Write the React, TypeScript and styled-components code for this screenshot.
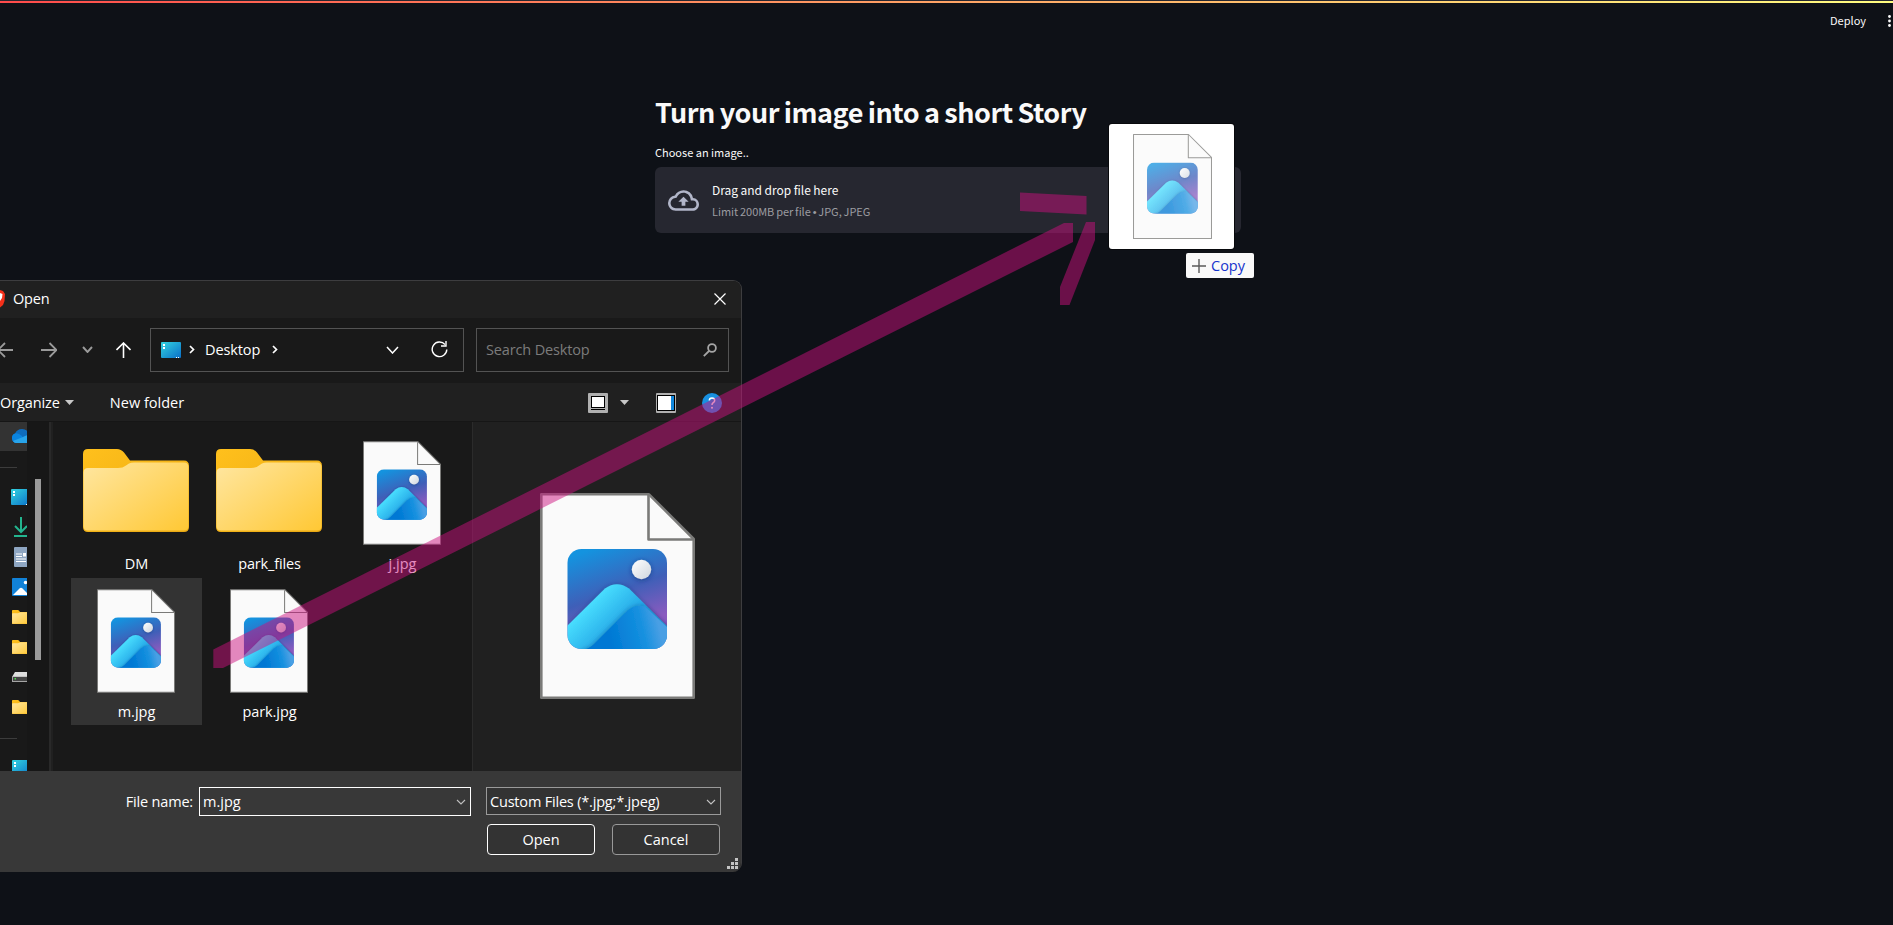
import React, { useId } from "react";
import styled, { createGlobalStyle } from "styled-components";

const Global = createGlobalStyle`
  * { box-sizing: border-box; }
  body { margin: 0; background: #0e1117; overflow: hidden; }
  svg { display: block; flex: none; }
`;

const ui = `"Open Sans", "Noto Sans", sans-serif`;
const web = `"Noto Sans CJK SC", "Noto Sans", sans-serif`;

/* ---------- Web page ---------- */
const Page = styled.div`
  position: relative;
  width: 1893px;
  height: 925px;
  overflow: hidden;
  background: #0e1117;
  color: #fafafa;
  font-family: ${web};
`;
const Rainbow = styled.div`
  height: 3px;
  border-top: 1px solid #262730;
  background: linear-gradient(90deg, #ff4b4b, #fffd80);
`;
const Toolbar = styled.header`
  display: flex;
  justify-content: flex-end;
  align-items: center;
  gap: 22px;
  height: 36px;
  padding-right: 2px;
`;
const Deploy = styled.span`
  margin-top: -2px;
  font-size: 11px;
  line-height: 16px;
`;
const Main = styled.main`
  width: 586px;
  margin-left: 655px;
  padding-top: 53px;
`;
const Title = styled.h1`
  margin: 0;
  height: 40px;
  font-size: 27px;
  font-weight: 700;
  line-height: 40px;
  letter-spacing: -0.5px;
  word-spacing: -0.7px;
  white-space: nowrap;
`;
const Label = styled.div`
  height: 18px;
  margin: 11px 0 6px;
  font-size: 11px;
  line-height: 18px;
  white-space: nowrap;
`;
const DropZone = styled.section`
  display: flex;
  align-items: center;
  gap: 13px;
  height: 66px;
  padding-left: 13px;
  border-radius: 6px;
  background: #262730;
`;
const DropTexts = styled.div`
  display: flex;
  flex-direction: column;
  gap: 3px;
  white-space: nowrap;
`;
const DropLine = styled.span<{ $muted?: boolean }>`
  height: 18px;
  line-height: 18px;
  font-family: ${(p) => (p.$muted ? `"Noto Sans CJK SC", sans-serif` : web)};
  font-size: ${(p) => (p.$muted ? 11 : 12)}px;
  letter-spacing: -0.05px;
  word-spacing: ${(p) => (p.$muted ? -0.5 : 0)}px;
  color: ${(p) => (p.$muted ? "#9c9ca1" : "#fafafa")};
`;
const Bullet = styled.span`
  font-family: "Liberation Sans", sans-serif;
`;

/* ---------- File dialog ---------- */
const Dialog = styled.div`
  position: absolute;
  left: 0;
  top: 280px;
  width: 742px;
  height: 592px;
  display: flex;
  flex-direction: column;
  overflow: hidden;
  border: 1px solid #3d3d3f;
  border-left: 0;
  border-bottom: 0;
  border-radius: 0 9px 9px 0;
  background: #191919;
  color: #fff;
  font-family: ${ui};
  font-size: 14.5px;
  line-height: 20px;
`;
const TitleBar = styled.div`
  display: flex;
  align-items: center;
  height: 37px;
  padding: 0 15px 1px 0;
  background: #202020;
`;
const Grow = styled.div`
  flex: 1;
`;
const Txt = styled.span<{ $ls?: number; $color?: string }>`
  white-space: nowrap;
  letter-spacing: ${(p) => p.$ls ?? 0}px;
  color: ${(p) => p.$color ?? "#fff"};
`;
const NavBar = styled.div`
  display: flex;
  align-items: center;
  height: 65px;
  padding: 0 12px 2px 0;
`;
const NavButtons = styled.div`
  display: flex;
  align-items: center;
  width: 150px;
`;
const Field = styled.div<{ $w: number }>`
  display: flex;
  align-items: center;
  width: ${(p) => p.$w}px;
  height: 44px;
  border: 1px solid #535353;
`;
const Address = styled(Field)`
  padding: 0 15px 0 10px;
  margin-right: 12px;
`;
const Search = styled(Field)`
  padding: 0 11px 0 9px;
`;
const Commands = styled.div`
  display: flex;
  align-items: center;
  height: 39px;
  padding: 1px 19px 0 0;
  background: #202020;
  border-bottom: 1px solid #161616;
`;
const Gap = styled.div<{ $w: number }>`
  flex: none;
  width: ${(p) => p.$w}px;
`;
const Body = styled.div`
  display: flex;
  height: 349px;
`;
const Side = styled.div`
  width: 27px;
  overflow: hidden;
`;
const SideItem = styled.div<{ $h?: number; $active?: boolean }>`
  display: flex;
  align-items: center;
  height: ${(p) => p.$h ?? 30}px;
  padding-left: 11px;
  background: ${(p) => (p.$active ? "#333" : "transparent")};
`;
const SideRule = styled.div`
  width: 17px;
  height: 1px;
  margin: 16px 0 14px;
  background: #3c3c3c;
`;
const ScrollTrack = styled.div`
  width: 22px;
  padding: 57px 0 0 8px;
  background: #171717;
`;
const Thumb = styled.div`
  width: 6px;
  height: 181px;
  background: #9a9a9a;
`;
const Splitter = styled.div`
  width: 4px;
  background: #202020;
  border-left: 2px solid #292929;
`;
const Files = styled.div`
  display: grid;
  grid-template-columns: repeat(3, 131px);
  grid-auto-rows: 147px;
  gap: 1px 2px;
  align-content: start;
  width: 419px;
  padding: 8px 0 0 18px;
`;
const Tile = styled.div<{ $selected?: boolean }>`
  display: flex;
  flex-direction: column;
  align-items: center;
  padding-top: 11px;
  background: ${(p) => (p.$selected ? "#333" : "transparent")};
`;
const Art = styled.div<{ $lift: number }>`
  display: flex;
  align-items: center;
  justify-content: center;
  height: 104px;
  margin: 0 2px 9px 0;
  padding-bottom: ${(p) => p.$lift}px;
`;
const Preview = styled.div`
  flex: 1;
  padding: 71px 0 0 67px;
  border-left: 1px solid #2b2b2b;
  background: #202020;
`;
const Footer = styled.div`
  position: relative;
  display: grid;
  grid-template-columns: 272px 235px;
  column-gap: 15px;
  row-gap: 8px;
  justify-content: end;
  align-content: start;
  flex: 1;
  padding: 16px 20px 0 0;
  background: #383838;
`;
const NameCell = styled.div`
  display: flex;
  align-items: center;
  justify-content: flex-end;
  height: 29px;
`;
const Combo = styled.div<{ $strong?: boolean }>`
  display: flex;
  flex: none;
  align-items: center;
  justify-content: space-between;
  width: ${(p) => (p.$strong ? 272 : 235)}px;
  height: ${(p) => (p.$strong ? 29 : 28)}px;
  padding: ${(p) => (p.$strong ? 0 : 1)}px 4px 0 3px;
  border: 1px solid ${(p) => (p.$strong ? "#fff" : "#9a9a9a")};
  background: ${(p) => (p.$strong ? "#383838" : "#333")};
`;
const Buttons = styled.div`
  grid-column: 2;
  display: flex;
  gap: 17px;
  padding-left: 1px;
`;
const Button = styled.button<{ $primary?: boolean }>`
  width: 108px;
  height: 31px;
  padding: 0;
  border: 1px solid ${(p) => (p.$primary ? "#fff" : "#999")};
  border-radius: 4px;
  background: #333;
  color: #fff;
  font: inherit;
`;
const Grip = styled.svg`
  position: absolute;
  right: 3px;
  bottom: 3px;
`;

/* ---------- Drag layer ---------- */
const DragCard = styled.div`
  position: absolute;
  left: 1109px;
  top: 124px;
  display: flex;
  justify-content: center;
  width: 125px;
  height: 125px;
  padding: 9px 0 0 2px;
  border-radius: 3px;
  background: #fff;
  box-shadow: 0 0 0 1px #08090c;
`;
const Faded = styled.div`
  opacity: 0.75;
`;
const CopyTag = styled.div`
  position: absolute;
  left: 1186px;
  top: 253px;
  display: flex;
  align-items: center;
  gap: 5px;
  width: 68px;
  height: 25px;
  padding-left: 6px;
  border-radius: 2px;
  background: #f9f9f9;
  color: #1533cc;
  font: 14.5px/25px ${ui};
`;
const Stroke = styled.svg`
  position: absolute;
  left: 0;
  top: 0;
`;

/* ---------- Drawings ---------- */
function PictureFile({ w, h, line }: { w: number; h: number; line: number }) {
  const id = useId().replace(/[^a-zA-Z0-9]/g, "");
  return (
    <svg width={w} height={h} viewBox="0 0 155 206">
      <defs>
        <linearGradient id={id + "s"} x1="0.25" y1="0" x2="0.6" y2="1">
          <stop offset="0" stopColor="#1493df" />
          <stop offset="0.45" stopColor="#3f5fb8" />
          <stop offset="0.8" stopColor="#8a5bbf" />
        </linearGradient>
        <linearGradient id={id + "m"} x1="42" y1="116" x2="70" y2="144" gradientUnits="userSpaceOnUse">
          <stop offset="0" stopColor="#4ae0ff" />
          <stop offset="1" stopColor="#23a6e6" />
        </linearGradient>
        <linearGradient id={id + "b"} x1="68" y1="140" x2="118" y2="128" gradientUnits="userSpaceOnUse">
          <stop offset="0" stopColor="#0078d4" />
          <stop offset="0.65" stopColor="#1490df" />
          <stop offset="1" stopColor="#4a9fe4" />
        </linearGradient>
        <linearGradient id={id + "o"} x1="0" y1="0" x2="1" y2="1">
          <stop offset="0" stopColor="#fff" />
          <stop offset="1" stopColor="#cfd6de" />
        </linearGradient>
        <clipPath id={id + "c"}>
          <rect x="27.5" y="56" width="99.5" height="100" rx="14" />
        </clipPath>
        <filter id={id + "f"} x="-30%" y="-30%" width="160%" height="160%">
          <feDropShadow dx="0" dy="1" stdDeviation="2.5" floodColor="#0b2a66" floodOpacity="0.55" />
        </filter>
      </defs>
      <path
        d={`M${line / 2} ${line / 2}H109L${155 - line / 2} 46V${206 - line / 2}H${line / 2}Z`}
        fill="#fafafa"
        stroke="#7a7a78"
        strokeWidth={line}
        strokeLinejoin="round"
      />
      <path d="M108.500 2V46.500H153" fill="none" stroke="#7a7a78" strokeWidth={line} strokeLinejoin="round" />
      <g clipPath={`url(#${id}c)`}>
        <rect x="27" y="56" width="101" height="101" fill={`url(#${id}s)`} />
        <circle cx="101.500" cy="76.500" r="9.700" fill={`url(#${id}o)`} filter={`url(#${id}f)`} />
        <path
          d="M22 138L65 95.500Q77 87 89 95.500L134 140V162H22Z"
          fill={`url(#${id}m)`}
          filter={`url(#${id}f)`}
        />
        <path
          d="M42 157Q49 156 54 151L87 118Q95 110.500 105 113.500L132 139V160H42Z"
          fill={`url(#${id}b)`}
          filter={`url(#${id}f)`}
        />
      </g>
    </svg>
  );
}

function Folder({ w, h }: { w: number; h: number }) {
  const id = useId().replace(/[^a-zA-Z0-9]/g, "");
  return (
    <svg width={w} height={h} viewBox="0 0 106 83" preserveAspectRatio="none">
      <defs>
        <linearGradient id={id} x1="0" y1="0.1" x2="1" y2="1">
          <stop offset="0" stopColor="#ffe59c" />
          <stop offset="1" stopColor="#ffc834" />
        </linearGradient>
        <linearGradient id={id + "t"} x1="0" y1="0" x2="1" y2="1">
          <stop offset="0" stopColor="#ffc01c" />
          <stop offset="1" stopColor="#e9a813" />
        </linearGradient>
      </defs>
      <path
        d="M5 0H34Q38 0 41 3.500L47 11.500H101Q106 11.500 106 17V78Q106 83 101 83H5Q0 83 0 78V5Q0 0 5 0Z"
        fill={`url(#${id}t)`}
      />
      <path
        d="M5 19H35Q40 19 43 16.500L46 14.500Q48 13.500 51 13.500H101Q105.500 13.500 105.500 18V77Q105.500 81.500 101 81.500H5Q0.500 81.500 0.500 77V23.500Q0.500 19 5 19Z"
        fill={`url(#${id})`}
      />
    </svg>
  );
}

function DesktopIcon() {
  const id = useId().replace(/[^a-zA-Z0-9]/g, "");
  return (
    <svg width="20" height="16" viewBox="0 0 20 16">
      <defs>
        <linearGradient id={id} x1="0" y1="0" x2="1" y2="1">
          <stop offset="0" stopColor="#33d3e0" />
          <stop offset="1" stopColor="#0a6fc8" />
        </linearGradient>
      </defs>
      <rect width="20" height="16" rx="1" fill={`url(#${id})`} />
      <path d="M2 2h2v2H2zM2 5h2v2H2zM15 15h1v1h-1zM17 15h1v1h-1z" fill="#fff" />
    </svg>
  );
}

const Chevron = ({ w, h, sw = 1.5, color = "#fff" }: { w: number; h: number; sw?: number; color?: string }) => (
  <svg width={w} height={h} viewBox={`0 0 ${w} ${h}`}>
    <path d={`M1 1L${w / 2} ${h - 1}L${w - 1} 1`} fill="none" stroke={color} strokeWidth={sw} />
  </svg>
);
const Crumb = () => (
  <svg width="6" height="9" viewBox="0 0 6 9">
    <path d="M1 1L4.500 4.500L1 8" fill="none" stroke="#fff" strokeWidth="1.700" />
  </svg>
);
const Caret = () => (
  <svg width="9" height="5" viewBox="0 0 9 5">
    <path d="M0 0H9L4.500 5Z" fill="#c8c8c8" />
  </svg>
);

const FileTile = ({ name, kind, selected, ls }: { name: string; kind: "folder" | "image"; selected?: boolean; ls?: number }) => (
  <Tile $selected={selected}>
    <Art $lift={kind === "folder" ? 5 : 0}>
      {kind === "folder" ? <Folder w={106} h={83} /> : <PictureFile w={78} h={104} line={2} />}
    </Art>
    <Txt $ls={ls}>{name}</Txt>
  </Tile>
);

export default function App() {
  return (
    <Page>
      <Global />
      <Rainbow />
      <Toolbar>
        <Deploy>Deploy</Deploy>
        <svg width="3" height="12" viewBox="0 0 3 12">
          <circle cx="1.500" cy="1.500" r="1.400" fill="#fafafa" />
          <circle cx="1.500" cy="6" r="1.400" fill="#fafafa" />
          <circle cx="1.500" cy="10.500" r="1.400" fill="#fafafa" />
        </svg>
      </Toolbar>
      <Main>
        <Title>Turn your image into a short Story</Title>
        <Label>Choose an image..</Label>
        <DropZone>
          <svg width="31" height="31" viewBox="0 0 24 24" fill="#b2b6c9">
            <path d="M19.350 10.040A7.490 7.490 0 0 0 12 4C9.110 4 6.600 5.640 5.350 8.040A5.994 5.994 0 0 0 0 14c0 3.310 2.690 6 6 6h13c2.760 0 5-2.240 5-5 0-2.640-2.050-4.780-4.650-4.960zM19 18H6c-2.210 0-4-1.790-4-4 0-2.050 1.530-3.760 3.560-3.970l1.070-.11.500-.95A5.469 5.469 0 0 1 12 6c2.620 0 4.880 1.860 5.390 4.430l.3 1.500 1.530.11A2.980 2.980 0 0 1 22 15c0 1.650-1.350 3-3 3zM8 13h2.550v3h2.900v-3H16l-4-4z" />
          </svg>
          <DropTexts>
            <DropLine>Drag and drop file here</DropLine>
            <DropLine $muted>
              Limit 200MB per file <Bullet>•</Bullet> JPG, JPEG
            </DropLine>
          </DropTexts>
        </DropZone>
      </Main>

      <Dialog>
        <TitleBar>
          <svg width="13" height="20" viewBox="0 0 13 20">
            <path d="M0 1L3 2L5 5L4.500 12L3 16L0 18.500Z" fill="#f5301a" />
            <path d="M0 4L2.500 5L2 9L0 12Z" fill="#fff" />
          </svg>
          <Txt $ls={-0.2}>Open</Txt>
          <Grow />
          <svg width="12" height="12" viewBox="0 0 12 12">
            <path d="M0.500 0.500L11.500 11.500M11.500 0.500L0.500 11.500" stroke="#fff" strokeWidth="1.200" />
          </svg>
        </TitleBar>
        <NavBar>
          <NavButtons>
            <svg width="13" height="16" viewBox="0 0 13 16">
              <path d="M13 8H-3M5 1L-2 8L5 15" fill="none" stroke="#9a9a9a" strokeWidth="1.800" />
            </svg>
            <Gap $w={28} />
            <svg width="16" height="16" viewBox="0 0 16 16">
              <path d="M0 8H15.500M8.500 1L15.500 8L8.500 15" fill="none" stroke="#9a9a9a" strokeWidth="1.800" />
            </svg>
            <Gap $w={25} />
            <Chevron w={11} h={7} sw={1.9} color="#9a9a9a" />
            <Gap $w={23} />
            <svg width="15" height="16" viewBox="0 0 15 16">
              <path d="M7.500 16V1M0.500 8L7.500 1L14.500 8" fill="none" stroke="#fff" strokeWidth="1.600" />
            </svg>
          </NavButtons>
          <Address $w={314}>
            <DesktopIcon />
            <Gap $w={8} />
            <Crumb />
            <Gap $w={10} />
            <Txt $ls={-0.1}>Desktop</Txt>
            <Gap $w={12} />
            <Crumb />
            <Grow />
            <Chevron w={13} h={8} />
            <Gap $w={32} />
            <svg width="17" height="17" viewBox="0 0 17 17">
              <path d="M14 3.500A7.300 7.300 0 1 0 15.800 8.500" fill="none" stroke="#fff" strokeWidth="1.400" />
              <path d="M15 0V5H10" fill="none" stroke="#fff" strokeWidth="1.400" />
            </svg>
          </Address>
          <Search $w={253}>
            <Txt $ls={-0.15} $color="#7c7c7c">
              Search Desktop
            </Txt>
            <Grow />
            <svg width="14" height="14" viewBox="0 0 14 14">
              <circle cx="9" cy="5" r="3.900" fill="none" stroke="#a5a5a5" strokeWidth="1.800" />
              <path d="M6 8L0.800 13.200" stroke="#a5a5a5" strokeWidth="1.800" />
            </svg>
          </Search>
        </NavBar>
        <Commands>
          <Txt $ls={-0.1}>Organize</Txt>
          <Gap $w={5} />
          <Caret />
          <Gap $w={36} />
          <Txt>New folder</Txt>
          <Grow />
          <svg width="20" height="20" viewBox="0 0 20 20">
            <rect width="20" height="20" rx="1" fill="#b0b0b0" />
            <rect x="3.500" y="3.500" width="13" height="11" fill="#fff" stroke="#000" />
            <path d="M3 16.500H17" stroke="#000" />
          </svg>
          <Gap $w={12} />
          <Caret />
          <Gap $w={27} />
          <svg width="20" height="20" viewBox="0 0 20 20">
            <rect width="20" height="20" rx="1" fill="#b0b0b0" />
            <rect x="1.500" y="2.500" width="17" height="15" fill="#fff" stroke="#000" />
            <rect x="15" y="3" width="3" height="14" fill="#1187dc" />
          </svg>
          <Gap $w={26} />
          <svg width="20" height="20" viewBox="0 0 20 20">
            <circle cx="10" cy="10" r="10" fill="#1890e0" />
            <path d="M7.300 7.600Q7.300 5 10 5T12.700 7.500Q12.700 8.800 11.300 9.700T10 12" fill="none" stroke="#fff" strokeWidth="1.500" />
            <circle cx="10" cy="14.700" r="1" fill="#fff" />
          </svg>
        </Commands>
        <Body>
          <Side>
            <SideItem $h={29} $active>
              <svg width="24" height="15" viewBox="0 0 24 15">
                <path d="M5 14A5 5 0 0 1 4 4.500A8 8 0 0 1 18 4L20 14Z" fill="#0f6cbd" />
                <path d="M5 14A5 5 0 0 1 4 4.500Q7 3.500 11 7L14 14Z" fill="#0a84e0" />
                <path d="M2 12L12 8Q18 4 24 8V14H5Q3 14 2 12Z" fill="#28a4ea" />
              </svg>
            </SideItem>
            <SideRule />
            <SideItem>
              <DesktopIcon />
            </SideItem>
            <SideItem>
              <svg width="20" height="20" viewBox="0 0 20 20">
                <path d="M10 0V15M4 9L10 15L16 9M3 19H17" fill="none" stroke="#23b58f" strokeWidth="2" />
              </svg>
            </SideItem>
            <SideItem>
              <svg width="20" height="20" viewBox="0 0 20 20">
                <rect x="3" width="15" height="20" rx="1" fill="#8ea6c2" />
                <path d="M5 7H11M5 9.500H11M5 12H15M5 14.500H15" stroke="#fff" strokeWidth="1.200" />
                <rect x="12" y="6" width="3" height="3.500" fill="#fff" />
              </svg>
            </SideItem>
            <SideItem>
              <svg width="20" height="18" viewBox="0 0 20 18">
                <rect x="1" width="19" height="18" rx="1" fill="#1182d8" />
                <path d="M2 17L8.500 10.500Q10 9 11.500 10.500L18 17Z" fill="#fff" />
                <circle cx="14.500" cy="4.500" r="1.700" fill="#fff" />
              </svg>
            </SideItem>
            <SideItem>
              <Gap $w={1} />
              <Folder w={18} h={14} />
            </SideItem>
            <SideItem>
              <Gap $w={1} />
              <Folder w={18} h={14} />
            </SideItem>
            <SideItem>
              <svg width="20" height="10" viewBox="0 0 20 10">
                <path d="M4 0H17L20 5H1Z" fill="#dedede" />
                <rect x="1" y="4.500" width="19" height="5.500" fill="#a5a5a5" />
                <rect x="2" y="5" width="18" height="4" fill="#444" />
                <rect x="3.500" y="6" width="1.500" height="1.500" fill="#4be04b" />
              </svg>
            </SideItem>
            <SideItem>
              <Gap $w={1} />
              <Folder w={18} h={14} />
            </SideItem>
            <SideRule />
            <SideItem $h={30}>
              <Gap $w={1} />
              <DesktopIcon />
            </SideItem>
          </Side>
          <ScrollTrack>
            <Thumb />
          </ScrollTrack>
          <Splitter />
          <Files>
            <FileTile name="DM" kind="folder" />
            <FileTile name="park_files" kind="folder" ls={-0.15} />
            <FileTile name="j.jpg" kind="image" />
            <FileTile name="m.jpg" kind="image" selected />
            <FileTile name="park.jpg" kind="image" ls={-0.1} />
          </Files>
          <Preview>
            <PictureFile w={155} h={206} line={2.6} />
          </Preview>
        </Body>
        <Footer>
          <NameCell>
            <Txt $ls={-0.18}>File name:</Txt>
            <Gap $w={6} />
            <Combo $strong>
              <Txt>m.jpg</Txt>
              <Chevron w={10} h={6} sw={1.1} color="#c0c0c0" />
            </Combo>
          </NameCell>
          <Combo>
            <Txt $ls={-0.19}>Custom Files (*.jpg;*.jpeg)</Txt>
            <Chevron w={10} h={6} sw={1.1} color="#c0c0c0" />
          </Combo>
          <Buttons>
            <Button $primary>Open</Button>
            <Button>Cancel</Button>
          </Buttons>
          <Grip width="11" height="11" viewBox="0 0 11 11">
            <path
              d="M8 0h3v3h-3zM4 4h3v3h-3zM8 4h3v3h-3zM0 8h3v3h-3zM4 8h3v3h-3zM8 8h3v3h-3z"
              fill="#c4c4c4"
            />
          </Grip>
        </Footer>
      </Dialog>

      <DragCard>
        <Faded>
          <PictureFile w={79} h={107} line={2} />
        </Faded>
      </DragCard>
      <CopyTag>
        <svg width="14" height="14" viewBox="0 0 14 14">
          <path d="M7 0V14M0 7H14" stroke="#5a5a5a" strokeWidth="1.400" />
        </svg>
        Copy
      </CopyTag>
      <Stroke width="1893" height="925" viewBox="0 0 1893 925">
        <g fill="#cd107e" fillOpacity="0.490">
          <path d="M213.300 649.500L1064 223H1073V242L223 668H213.300Z" />
          <path d="M1020 192.500L1086.500 196V214.500L1020 211Z" />
          <path d="M1086 222H1095V240L1069.500 305H1060V287Z" />
        </g>
      </Stroke>
    </Page>
  );
}
